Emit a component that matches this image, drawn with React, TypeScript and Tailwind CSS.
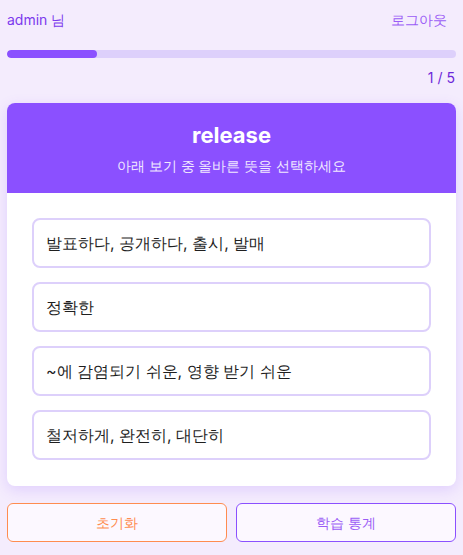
import React from 'react'

const options = [
  '발표하다, 공개하다, 출시, 발매',
  '정확한',
  '~에 감염되기 쉬운, 영향 받기 쉬운',
  '철저하게, 완전히, 대단히',
]

export default function App() {
  const current = 1
  const total = 5

  return (
    <div className="min-h-[555px] w-full bg-[#f4ecfd] px-[7px] font-[Inter,sans-serif]">
      <header className="flex items-center justify-between h-[37px] pt-[1px]">
        <span className="text-[14px] text-[#7c3aed]">admin 님</span>
        <button className="text-[14px] text-[#9b5cf6] mr-[9px]">로그아웃</button>
      </header>

      <div className="mt-[13px] h-[8px] w-full rounded-full bg-[#ddd0fb] overflow-hidden">
        <div className="h-full rounded-full bg-[#8b50ff]" style={{ width: `${(current / total) * 100}%` }} />
      </div>
      <div className="mt-[9px] pr-[1px] text-right text-[14px] text-[#6d28d9]">
        {current} / {total}
      </div>

      <div className="mt-[15px] rounded-[8px] bg-white shadow-[0_4px_14px_rgba(139,80,255,0.18)] overflow-hidden">
        <div className="bg-[#8b50ff] h-[90px] flex flex-col items-center pt-[17px]">
          <h1 className="text-[22px] font-bold text-white leading-[30px]">release</h1>
          <p className="mt-[5px] text-[14px] text-[#f1e9ff]">아래 보기 중 올바른 뜻을 선택하세요</p>
        </div>
        <div className="flex flex-col gap-[14px] px-[25px] pt-[25px] pb-[26px]">
          {options.map((o) => (
            <button
              key={o}
              className="h-[50px] w-full rounded-[8px] border-2 border-[#ddd0fb] bg-white px-[12px] text-left text-[16px] text-[#1f1f1f]"
            >
              {o}
            </button>
          ))}
        </div>
      </div>

      <div className="mt-[17px] grid grid-cols-2 gap-[9px]">
        <button className="h-[39px] rounded-[6px] border border-[#ff8c50] bg-[#fcf8ff] text-[14px] text-[#ff8c50]">
          초기화
        </button>
        <button className="h-[39px] rounded-[6px] border border-[#8b50ff] bg-[#fcf8ff] text-[14px] text-[#9b5cf6]">
          학습 통계
        </button>
      </div>
    </div>
  )
}
